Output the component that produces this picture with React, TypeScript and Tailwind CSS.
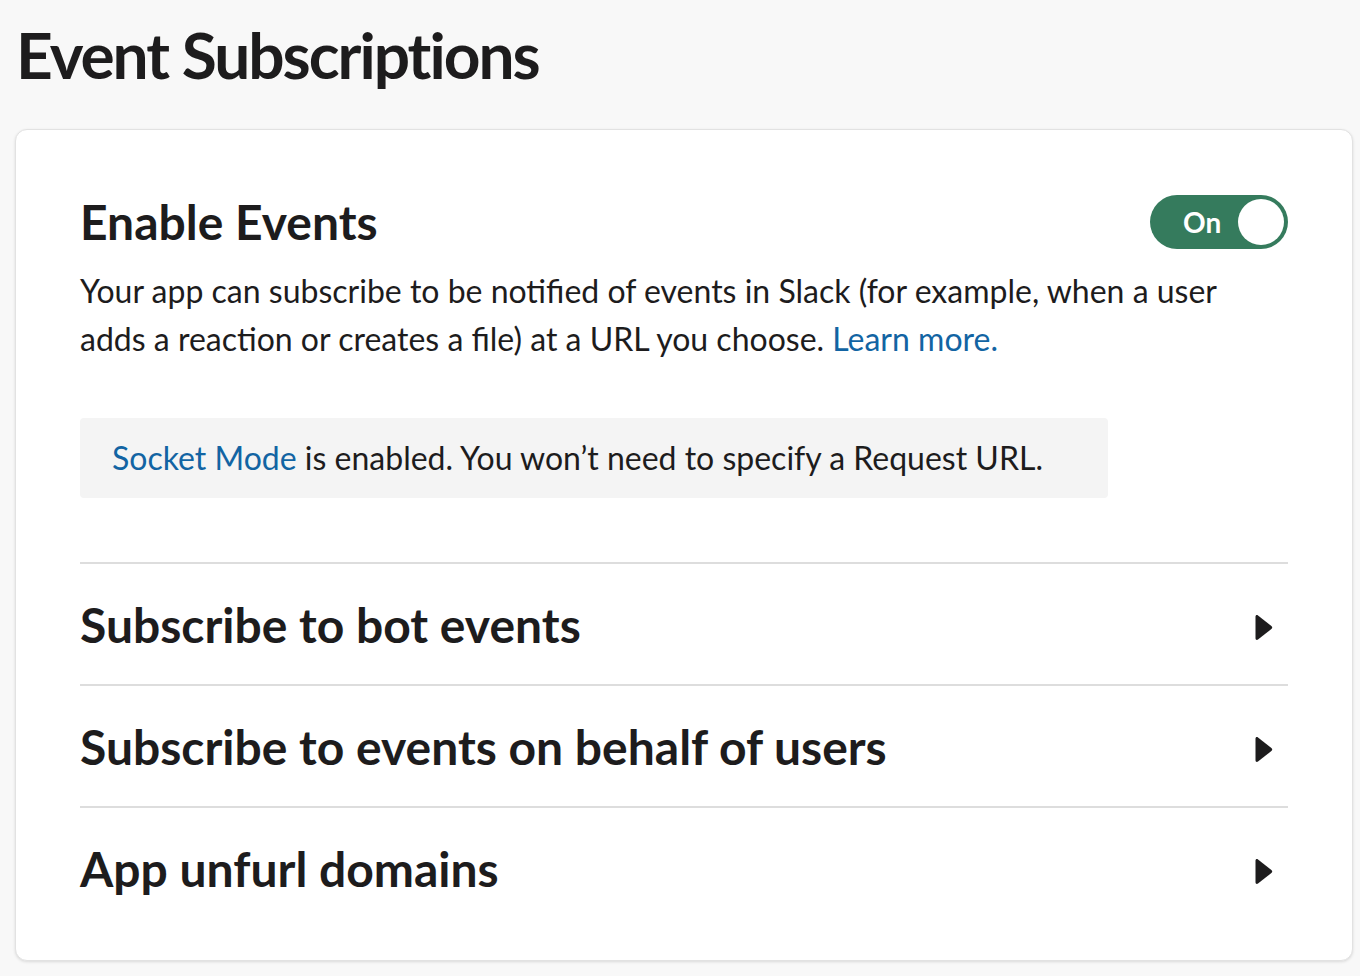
import React, { useState } from 'react';

const sections = [
  'Subscribe to bot events',
  'Subscribe to events on behalf of users',
  'App unfurl domains',
];

const Caret: React.FC = () => (
  <svg width="18" height="27" viewBox="0 0 18 27" className="shrink-0">
    <path
      d="M3 1.5 C1.8 0.6 0.5 1.2 0.5 2.7 L0.5 24.3 C0.5 25.8 1.8 26.4 3 25.5 L16.4 15 C17.5 14.1 17.5 12.9 16.4 12 Z"
      fill="#1d1c1d"
    />
  </svg>
);

const App: React.FC = () => {
  const [enabled, setEnabled] = useState(true);

  return (
    <div
      className="min-h-[976px] bg-[#f8f8f8] pl-[15px] pr-[7px] pt-[15px] text-[#1d1c1d]"
      style={{ fontFamily: 'Lato, "Noto Sans", sans-serif' }}
    >
      <h1 className="pl-[1px] text-[64px] font-bold leading-[80px] tracking-[-2px]">Event Subscriptions</h1>

      <div className="mt-[34px] rounded-[12px] border border-[#e2e2e2] bg-white px-16 pt-16 pb-[32px] shadow-[0_1px_3px_rgba(0,0,0,0.12)]">
        <div className="flex h-[56px] items-center justify-between">
          <h2 className="text-[48px] font-bold leading-[56px]">Enable Events</h2>
          <button
            onClick={() => setEnabled(!enabled)}
            className="flex h-[54px] w-[138px] items-center justify-between rounded-full bg-[#357b5d] pl-[33px] pr-[4px]"
          >
            <span className="text-[28px] font-bold leading-none text-white">{enabled ? 'On' : 'Off'}</span>
            <span className="h-[46px] w-[46px] rounded-full bg-white" />
          </button>
        </div>

        <p className="mt-[17px] text-[32px] leading-[48px]">
          Your app can subscribe to be notified of events in Slack (for example, when a user adds a reaction or
          creates a file) at a URL you choose. <a className="text-[#1264a3]" href="#">Learn more.</a>
        </p>

        <div className="mt-[55px] w-[1028px] rounded-[4px] bg-[#f4f4f4] px-8 py-4 text-[32px] leading-[48px]">
          <a className="text-[#1264a3]" href="#">Socket Mode</a> is enabled. You won’t need to specify a Request URL.
        </div>

        <div className="mt-16">
          {sections.map((title) => (
            <div key={title} className="flex h-[122px] items-center justify-between border-t-2 border-[#dddddd] pr-[15px]">
              <h3 className="pt-[1px] text-[48px] font-bold leading-[56px]">{title}</h3>
              <div className="pt-[6px]">
                <Caret />
              </div>
            </div>
          ))}
        </div>
      </div>
    </div>
  );
};

export default App;
